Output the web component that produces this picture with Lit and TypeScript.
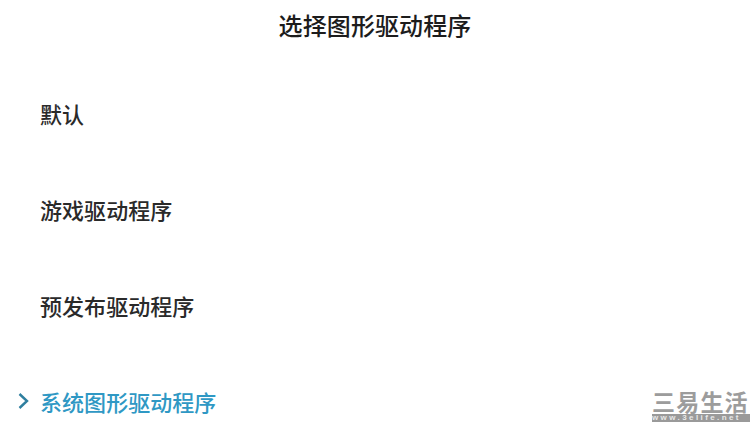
import { LitElement, html, css } from "lit";
import { customElement } from "lit/decorators.js";

@customElement("app-root")
export class AppRoot extends LitElement {
  static styles = css`
    :host {
      display: block;
      width: 750px;
      height: 422px;
      background: #fff;
      overflow: hidden;
      position: relative;
      font-family: "Noto Sans CJK SC", "Noto Sans", sans-serif;
      color: #222;
    }
    .title {
      height: 48px;
      display: flex;
      align-items: center;
      justify-content: center;
      font-size: 24px;
      font-weight: 500;
      letter-spacing: 0.1px;
      color: #1c1c1c;
    }
    .list {
      display: flex;
      flex-direction: column;
      padding-top: 17px;
    }
    .row {
      height: 96px;
      display: flex;
      align-items: center;
      padding-left: 18px;
      font-size: 22px;
      font-weight: 500;
      letter-spacing: 0.05px;
      color: #2a2a2a;
    }
    .chev { width: 22px; flex: none; display: flex; }
    .active { color: #2f98c4; }
    .wm {
      position: absolute;
      right: 0;
      top: 389px;
      width: 98px;
      display: flex;
      flex-direction: column;
      gap: 1px;
      color: #9c9c9c;
    }
    .wm-cn { font-size: 23px; line-height: 24px; font-weight: 700; letter-spacing: 1.2px; white-space: nowrap; }
    .wm-url {
      font-family: "Liberation Sans", sans-serif;
      font-size: 8px;
      line-height: 8px;
      font-weight: 700;
      background: #9a9a9a;
      color: #e8e8e8;
      letter-spacing: 2.4px;
      white-space: nowrap;
    }
  `;

  render() {
    const rows = ["默认", "游戏驱动程序", "预发布驱动程序"];
    return html`
      <div class="title">选择图形驱动程序</div>
      <div class="list">
        ${rows.map(
          (r) => html`<div class="row"><span class="chev"></span>${r}</div>`
        )}
        <div class="row active">
          <span class="chev">
            <svg width="12" height="18" viewBox="0 0 12 18" fill="none">
              <path d="M1.5 2l7.5 7-7.5 7" stroke="#2f7f9f" stroke-width="2.4" />
            </svg>
          </span>
          系统图形驱动程序
        </div>
      </div>
      <div class="wm">
        <div class="wm-cn">三易生活</div>
        <div class="wm-url">www.3elife.net</div>
      </div>
    `;
  }
}
